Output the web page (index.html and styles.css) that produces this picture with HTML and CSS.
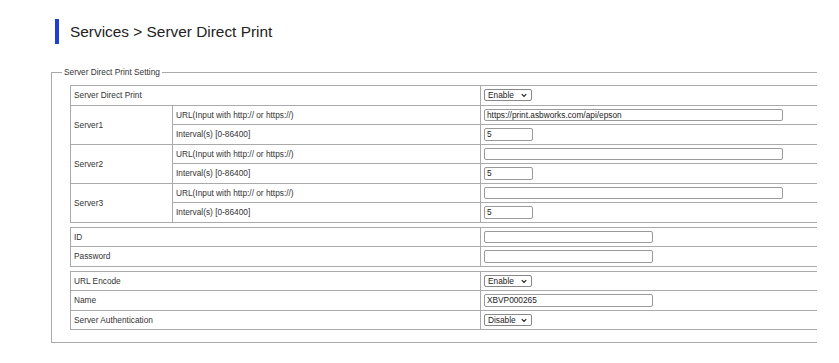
FILE: index.html
```html
<!DOCTYPE html>
<html lang="en">
<head>
  <meta charset="UTF-8" />
  <meta name="viewport" content="width=device-width, initial-scale=1.0" />
  <title>Server Direct Print</title>
  <link rel="stylesheet" href="styles.css">
</head>
<body>
  <div class="page">
    <!-- Title -->
    <div class="title">
      <span class="title-bar"></span>
      <h1>Services &gt; Server Direct Print</h1>
    </div>

    <!-- Settings -->
    <fieldset class="settings">
      <legend>Server Direct Print Setting</legend>

      <table class="form-table">
        <colgroup>
          <col class="col-server" />
          <col class="col-item" />
          <col />
        </colgroup>
        <tr>
          <td colspan="2">Server Direct Print</td>
          <td>
            <span class="select-wrap">
              <select><option>Enable</option><option>Disable</option></select>
              <svg class="chevron" viewBox="0 0 8 6"><path d="M1 1.5 L4 4.5 L7 1.5" /></svg>
            </span>
          </td>
        </tr>
        <tr>
          <td rowspan="2">Server1</td>
          <td>URL(Input with http:// or https://)</td>
          <td><input type="text" class="url" value="https://print.asbworks.com/api/epson" /></td>
        </tr>
        <tr>
          <td>Interval(s) [0-86400]</td>
          <td><input type="text" class="short" value="5" /></td>
        </tr>
        <tr>
          <td rowspan="2">Server2</td>
          <td>URL(Input with http:// or https://)</td>
          <td><input type="text" class="url" value="" /></td>
        </tr>
        <tr>
          <td>Interval(s) [0-86400]</td>
          <td><input type="text" class="short" value="5" /></td>
        </tr>
        <tr>
          <td rowspan="2">Server3</td>
          <td>URL(Input with http:// or https://)</td>
          <td><input type="text" class="url" value="" /></td>
        </tr>
        <tr>
          <td>Interval(s) [0-86400]</td>
          <td><input type="text" class="short" value="5" /></td>
        </tr>
      </table>

      <table class="form-table">
        <colgroup>
          <col class="col-label" />
          <col />
        </colgroup>
        <tr>
          <td>ID</td>
          <td><input type="text" class="mid" value="" /></td>
        </tr>
        <tr>
          <td>Password</td>
          <td><input type="password" class="mid" value="" /></td>
        </tr>
      </table>

      <table class="form-table">
        <colgroup>
          <col class="col-label" />
          <col />
        </colgroup>
        <tr>
          <td>URL Encode</td>
          <td>
            <span class="select-wrap">
              <select><option>Enable</option><option>Disable</option></select>
              <svg class="chevron" viewBox="0 0 8 6"><path d="M1 1.5 L4 4.5 L7 1.5" /></svg>
            </span>
          </td>
        </tr>
        <tr>
          <td>Name</td>
          <td><input type="text" class="mid" value="XBVP000265" /></td>
        </tr>
        <tr>
          <td>Server Authentication</td>
          <td>
            <span class="select-wrap">
              <select><option>Disable</option><option>Enable</option></select>
              <svg class="chevron" viewBox="0 0 8 6"><path d="M1 1.5 L4 4.5 L7 1.5" /></svg>
            </span>
          </td>
        </tr>
      </table>
    </fieldset>
  </div>
</body>
</html>
```

FILE: styles.css
```css
body {
  font-family: "Liberation Sans", Arial, sans-serif;
  margin: 0;
  padding: 0;
  background-color: #fff;
  color: #333;
}
.page {
  width: 817px;
  overflow: hidden;
  padding-top: 19px;
}
.title {
  display: flex;
  align-items: center;
  margin-left: 55px;
  height: 25px;
}
.title-bar {
  width: 4px;
  height: 25px;
  background-color: #1e3ed8;
}
.title h1 {
  margin: 0 0 0 11px;
  font-size: 15.4px;
  font-weight: normal;
  color: #222;
}
.settings {
  margin: 23px 0 0 51px;
  width: 800px;
  padding: 8px 0 12px 18px;
  border: 1px solid #aaa;
  border-right: none;
}
.settings legend {
  margin-left: -8px;
  padding: 0 2px;
  font-size: 8.3px;
  color: #333;
}
.form-table {
  width: 780px;
  table-layout: fixed;
  border-collapse: collapse;
  font-size: 8.3px;
  margin-bottom: 4px;
}
.form-table:last-child {
  margin-bottom: 0;
}
.form-table .col-server {
  width: 102px;
}
.form-table .col-item {
  width: 308px;
}
.form-table .col-label {
  width: 410px;
}
.form-table td {
  border: 1px solid #aaa;
  height: 18.5px;
  padding: 0 3px;
  white-space: nowrap;
}
.form-table input {
  box-sizing: border-box;
  height: 12.5px;
  border: 1px solid #999;
  border-radius: 2px;
  padding: 0 2px;
  font-family: "Liberation Sans", Arial, sans-serif;
  font-size: 8.3px;
  color: #222;
  vertical-align: middle;
}
.form-table input.url {
  width: 299px;
}
.form-table input.short {
  width: 49px;
}
.form-table input.mid {
  width: 169px;
}
.select-wrap {
  position: relative;
  display: inline-block;
  vertical-align: middle;
}
.select-wrap select {
  appearance: none;
  -webkit-appearance: none;
  box-sizing: border-box;
  width: 48px;
  height: 12px;
  border: 1px solid #888;
  border-radius: 2px;
  padding: 0 0 0 3px;
  background-color: #fff;
  font-family: "Liberation Sans", Arial, sans-serif;
  font-size: 8.3px;
  color: #222;
  display: block;
}
.select-wrap .chevron {
  position: absolute;
  right: 5px;
  top: 4px;
  width: 6px;
  height: 4.5px;
  fill: none;
  stroke: #222;
  stroke-width: 1.6;
}
```
